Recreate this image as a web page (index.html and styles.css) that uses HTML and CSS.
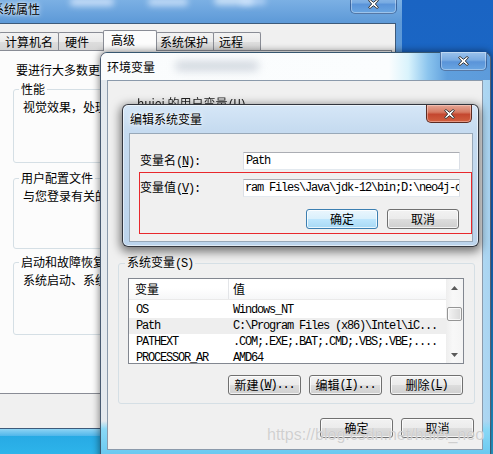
FILE: index.html
```html
<!DOCTYPE html>
<html>
<head>
<meta charset="utf-8">
<link rel="stylesheet" href="styles.css">
</head>
<body>
  <div class="win back">
    <div class="titlebar">
      <span class="title">系统属性</span>
      <span class="blur b1"></span>
      <span class="blur b2"></span>
      <span class="blur b3"></span>
      <span class="blur b4"></span>
      <div class="close blue">
        <svg width="11" height="10" viewBox="0 0 11 10"><path d="M0.5 1.5 L2 0.5 L5.5 3.3 L9 0.5 L10.5 1.5 L7.3 5 L10.5 8.5 L9 9.5 L5.5 6.7 L2 9.5 L0.5 8.5 L3.7 5 Z" fill="#fff" stroke="#3a3a3a" stroke-width="1" stroke-linejoin="round"/></svg>
      </div>
    </div>
    <div class="client">
      <div class="tabs">
        <div class="tab t1">计算机名</div>
        <div class="tab t2">硬件</div>
        <div class="tab t3 sel">高级</div>
        <div class="tab t4">系统保护</div>
        <div class="tab t5">远程</div>
      </div>
      <div class="panel">
        <div class="intro">要进行大多数更改，你必须作为管理员登录。</div>
        <fieldset class="grp g1"><legend>性能</legend><div class="gtext">视觉效果，处理器计划，内存使用，以及虚拟内存</div></fieldset>
        <fieldset class="grp g2"><legend>用户配置文件</legend><div class="gtext">与您登录有关的桌面设置</div></fieldset>
        <fieldset class="grp g3"><legend>启动和故障恢复</legend><div class="gtext">系统启动、系统失败和调试信息</div></fieldset>
      </div>
    </div>
  </div>

  <div class="win env">
    <div class="titlebar">
      <span class="title">环境变量</span>
      <span class="blur e1"></span>
      <div class="close blue">
        <svg width="11" height="10" viewBox="0 0 11 10"><path d="M0.5 1.5 L2 0.5 L5.5 3.3 L9 0.5 L10.5 1.5 L7.3 5 L10.5 8.5 L9 9.5 L5.5 6.7 L2 9.5 L0.5 8.5 L3.7 5 Z" fill="#fff" stroke="#3a3a3a" stroke-width="1" stroke-linejoin="round"/></svg>
      </div>
    </div>
    <div class="client">
      <div class="uvar"><span class="uvlabel">huiei 的用户变量<span class="mono">(U)</span></span></div>
      <fieldset class="grp sys">
        <legend>系统变量<span class="mono">(S)</span></legend>
        <div class="list">
          <div class="lv-main">
            <div class="lv-head"><div class="c1">变量</div><div class="c2">值</div></div>
            <div class="lv-rows mono">
              <div class="row"><div class="c1">OS</div><div class="c2">Windows_NT</div></div>
              <div class="row hl"><div class="c1">Path</div><div class="c2">C:\Program Files (x86)\Intel\iC...</div></div>
              <div class="row"><div class="c1">PATHEXT</div><div class="c2">.COM;.EXE;.BAT;.CMD;.VBS;.VBE;....</div></div>
              <div class="row"><div class="c1">PROCESSOR_AR</div><div class="c2">AMD64</div></div>
            </div>
          </div>
          <div class="vscroll">
            <div class="arrow"><svg width="7" height="4" viewBox="0 0 7 4"><path d="M0 4 L3.5 0 L7 4Z" fill="#5a5a5a"/></svg></div>
            <div class="track-a"></div>
            <div class="thumb"></div>
            <div class="track-b"></div>
            <div class="arrow"><svg width="7" height="4" viewBox="0 0 7 4"><path d="M0 0 L3.5 4 L7 0Z" fill="#5a5a5a"/></svg></div>
          </div>
        </div>
        <div class="btnrow">
          <div class="btn">新建<span class="mono">(<u>W</u>)...</span></div>
          <div class="btn">编辑<span class="mono">(<u>I</u>)...</span></div>
          <div class="btn">删除<span class="mono">(<u>L</u>)</span></div>
        </div>
      </fieldset>
      <div class="envbtns">
        <div class="btn">确定</div>
        <div class="btn">取消</div>
      </div>
    </div>

    <div class="win edit">
      <div class="titlebar">
        <span class="title">编辑系统变量</span>
        <div class="close red">
          <svg width="11" height="10" viewBox="0 0 11 10"><path d="M0.5 1.5 L2 0.5 L5.5 3.3 L9 0.5 L10.5 1.5 L7.3 5 L10.5 8.5 L9 9.5 L5.5 6.7 L2 9.5 L0.5 8.5 L3.7 5 Z" fill="#fff" stroke="#3a3a3a" stroke-width="1" stroke-linejoin="round"/></svg>
        </div>
      </div>
      <div class="client">
        <div class="frow r1">
          <div class="lbl">变量名<span class="mono">(<u>N</u>):</span></div>
          <div class="input mono p2">Path</div>
        </div>
        <div class="redbox">
          <div class="frow">
            <div class="lbl">变量值<span class="mono">(<u>V</u>):</span></div>
            <div class="input mono p1">ram Files\Java\jdk-12\bin;D:\neo4j-community-3.5.5\bin</div>
          </div>
          <div class="ebtns">
            <div class="btn default">确定</div>
            <div class="btn">取消</div>
          </div>
        </div>
      </div>
    </div>
  </div>

  <div class="watermark">https://blog.csdn.net/huiei_neo</div>
</body>
</html>
```

FILE: styles.css
```css
* { box-sizing: border-box; }
html, body { margin: 0; padding: 0; }
body {
  width: 493px;
  height: 454px;
  overflow: hidden;
  position: relative;
  background: linear-gradient(180deg, #1a64c3 0%, #1b6cc8 55%, #22a0df 92%, #2db4ea 100%);
  font-family: "Noto Sans CJK SC", sans-serif;
  font-size: 12px;
  line-height: 14px;
  color: #000;
}
.mono {
  font-family: "Liberation Mono", monospace;
  letter-spacing: -1.2px;
}
u { text-decoration: underline; text-underline-offset: 1px; }

.win { position: absolute; }
.titlebar { position: relative; display: flex; align-items: center; }
.title { position: relative; z-index: 1; text-shadow: 0 0 6px rgba(255,255,255,0.95), 0 0 3px rgba(255,255,255,0.9); white-space: nowrap; }
.blur { position: absolute; border-radius: 6px; filter: blur(3px); }

.close {
  position: absolute;
  display: flex;
  align-items: center;
  justify-content: center;
  border-radius: 0 0 5px 5px;
}
.close.blue {
  border: 1px solid rgba(30, 60, 110, 0.55);
  border-top: none;
  background: linear-gradient(#9cc3ec 0%, #78abe2 45%, #5a94d9 55%, #6aa6e2 100%);
  box-shadow: inset 0 0 0 1px rgba(255,255,255,0.35);
}
.close.red {
  border: 1px solid #5b2b22;
  border-top: none;
  background: linear-gradient(#e6a796 0%, #d67a62 42%, #c4472f 55%, #d2603f 100%);
  box-shadow: inset 0 0 0 1px rgba(255,220,210,0.45);
}

/* ---------- back window: 系统属性 ---------- */
.back {
  left: -10px;
  top: -8px;
  width: 412px;
  height: 444px;
  border-radius: 8px 8px 0 0;
  display: flex;
  flex-direction: column;
  z-index: 1;
  background: linear-gradient(180deg, #86b8e8 0px, #5e9ad8 30px, #4f8dd4 280px, #56b0e8 425px, #8fd4f4 437px, #4fb6ea 444px);
}
.back .titlebar { height: 31px; padding: 3px 0 0 2px; }
.back .b1 { left: 80px; top: 6px; width: 44px; height: 8px; background: rgba(225,238,255,0.75); }
.back .b2 { left: 158px; top: 6px; width: 40px; height: 8px; background: rgba(225,238,255,0.7); }
.back .b3 { left: 224px; top: 4px; width: 40px; height: 9px; background: rgba(235,245,255,0.7); }
.back .b4 { left: 250px; top: 5px; width: 26px; height: 8px; background: rgba(210,230,255,0.6); }
.back .close { right: 5px; top: 2px; width: 47px; height: 20px; }
.back .client {
  margin: 0 6px 7px 8px;
  flex: 1;
  border: 1px solid #3d5a7a;
  background: #f0f0f0;
  padding-top: 6px;
}
.tabs { display: flex; align-items: flex-end; height: 20px; position: relative; z-index: 1; }
.tab {
  height: 18px;
  border: 1px solid #898c95;
  border-bottom: none;
  border-radius: 2px 2px 0 0;
  margin-right: -1px;
  background: linear-gradient(#f3f3f3 0%, #ebebeb 50%, #dedede 51%, #d5d5d5 100%);
  display: flex;
  align-items: center;
  white-space: nowrap;
}
.t1 { width: 60px; padding-left: 5px; }
.t2 { width: 46px; padding-left: 6px; }
.t3 { width: 54px; padding-left: 7px; }
.t4 { width: 58px; padding-left: 3px; }
.t5 { width: 48px; padding-left: 5px; }
.tab.sel {
  height: 21px;
  margin-bottom: -1px;
  background: #fcfcfc;
  position: relative;
  z-index: 2;
  padding-bottom: 2px;
}
.panel {
  height: 344px;
  margin-right: 3px;
  border: 1px solid #898c95;
  background: #fcfcfc;
  padding: 12px 0 0 13px;
}
.intro { padding-left: 3px; height: 14px; white-space: nowrap; }
.grp {
  margin: 0;
  padding: 0;
  min-width: 0;
  border: 1px solid #d5dfe5;
  border-radius: 3px;
}
.grp legend { padding: 0 2px; margin-left: 5px; line-height: 14px; white-space: nowrap; }
.panel .grp { width: 380px; }
.g1 { margin-top: 5px; height: 81px; }
.g2 { margin-top: 8px; height: 78px; }
.g3 { margin-top: 6px; height: 80px; }
.gtext { padding: 4px 0 0 9px; white-space: nowrap; }

/* ---------- env window: 环境变量 ---------- */
.env {
  left: 100px;
  top: 52px;
  width: 391px;
  height: 410px;
  border: 1px solid rgba(40, 50, 70, 0.75);
  border-radius: 7px 7px 0 0;
  box-shadow: 0 0 7px 1px rgba(0,0,0,0.45);
  z-index: 2;
  background:
    linear-gradient(180deg, rgba(127,211,244,0) 0px, rgba(127,211,244,0) 368px, #8ad8f6 376px, #5fc4ef 410px),
    linear-gradient(90deg, #e4e9ee 0%, #f1f4f7 60%, #d3ecf9 85%, #a9d4f1 100%);
}
.env > .titlebar {
  height: 27px;
  padding-left: 6px;
  border-radius: 6px 6px 0 0;
  background: linear-gradient(90deg, #fafcfd 0%, #fbfdfe 74%, #d9f3fc 79%, #8cc5ee 84%, #5f9fdd 89%, #5d9bdb 100%);
}
.env .e1 { left: 74px; top: 8px; width: 84px; height: 10px; filter: blur(4px); background: rgba(150,162,180,0.4); }
.env > .titlebar .close { right: 3px; top: -1px; width: 47px; height: 19px; }
.env > .client {
  margin-left: 6px;
  width: 376px;
  height: 370px;
  border: 1px solid #8b9aab;
  background: #f0f0f0;
}
.uvar { height: 174px; padding: 15px 0 0 29px; }
.uvlabel { filter: blur(0.6px); color: #222; white-space: nowrap; }
.sys { margin-left: 10px; width: 357px; height: 149px; }
.sys legend { margin-left: 6px; }
.list {
  margin: 7px 0 0 9px;
  width: 336px;
  height: 86px;
  border: 1px solid #828790;
  background: #fff;
  display: flex;
}
.lv-main { flex: 1; overflow: hidden; }
.lv-head {
  height: 21px;
  display: flex;
  align-items: center;
  background: linear-gradient(#ffffff 0%, #ffffff 45%, #f6f7f8 100%);
  border-bottom: 1px solid #eaeaea;
}
.lv-head .c1 { width: 100px; padding-left: 6px; height: 100%; display: flex; align-items: center; border-right: 1px solid #e3e5e8; }
.lv-head .c2 { padding-left: 4px; }
.lv-rows { padding-top: 2px; }
.row { display: flex; height: 16px; align-items: center; white-space: nowrap; }
.row.hl { background: #eeeeee; }
.row .c1 { width: 100px; padding-left: 7px; }
.row .c2 { padding-left: 4px; }
.vscroll {
  width: 17px;
  display: flex;
  flex-direction: column;
  background: linear-gradient(90deg, #eeeeee, #f8f8f8 40%, #f4f4f4);
}
.arrow { height: 17px; display: flex; align-items: center; justify-content: center; }
.track-a { height: 11px; }
.thumb {
  height: 14px;
  width: 15px;
  margin-left: 1px;
  border: 1px solid #959595;
  border-radius: 2px;
  background: linear-gradient(90deg, #f4f4f4, #e6e6e6 50%, #d9d9d9);
  box-shadow: inset 0 0 0 1px rgba(255,255,255,0.7);
}
.track-b { flex: 1; }

.btn {
  height: 20px;
  width: 73px;
  border: 1px solid #707070;
  border-radius: 3px;
  background: linear-gradient(#f2f2f2 0%, #ebebeb 50%, #dddddd 51%, #cfcfcf 100%);
  box-shadow: inset 0 0 0 1px rgba(255,255,255,0.75);
  display: flex;
  align-items: center;
  justify-content: center;
  white-space: nowrap;
}
.btn.default {
  border-color: #3c7fb1;
  background: linear-gradient(#eaf6fd 0%, #d9f0fc 50%, #bee6fd 51%, #a7d9f5 100%);
}
.btnrow { display: flex; gap: 8px; margin: 11px 0 0 109px; }
.envbtns { display: flex; gap: 8px; margin: 14px 0 0 212px; }

/* ---------- edit dialog: 编辑系统变量 ---------- */
.edit {
  left: 21px;
  top: 51px;
  width: 357px;
  height: 143px;
  border: 1px solid rgba(25, 25, 30, 0.85);
  border-radius: 6px;
  z-index: 3;
  background: linear-gradient(180deg, #d6e7f7 0%, #c6dbf0 25px, #bcd4ec 100%);
  box-shadow: 0 3px 10px 2px rgba(0,0,0,0.5), inset 0 0 0 1px rgba(255,255,255,0.55);
}
.edit .titlebar { height: 28px; padding-left: 7px; }
.edit .close { right: 6px; top: 0; width: 46px; height: 18px; }
.edit .client {
  margin-left: 6px;
  width: 344px;
  height: 109px;
  border: 1px solid #98a8b8;
  background: #f0f0f0;
}
.frow { display: flex; height: 18px; align-items: center; }
.r1 { margin: 18px 0 0 10px; }
.lbl { width: 103px; white-space: nowrap; }
.input {
  width: 217px;
  height: 18px;
  border: 1px solid #dbdfe6;
  border-top-color: #abadb3;
  border-bottom-color: #e3e9ef;
  background: #fff;
  line-height: 16px;
  white-space: nowrap;
  overflow: hidden;
}
.p2 { padding-left: 2px; }
.p1 { padding-left: 1px; }
.redbox {
  margin: 2px 0 0 9px;
  width: 333px;
  height: 62px;
  border: 1px solid #e8282c;
  padding-top: 6px;
}
.ebtns { display: flex; gap: 9px; margin: 12px 0 0 166px; }
.ebtns .btn { width: 72px; }

.watermark {
  position: absolute;
  left: 267px;
  top: 426px;
  z-index: 5;
  font-family: "Liberation Sans", Arial, sans-serif;
  font-size: 16px;
  line-height: 18px;
  color: rgba(200, 200, 200, 0.85);
  text-shadow: 0 0 1px rgba(255,255,255,0.7);
  white-space: nowrap;
}
```
